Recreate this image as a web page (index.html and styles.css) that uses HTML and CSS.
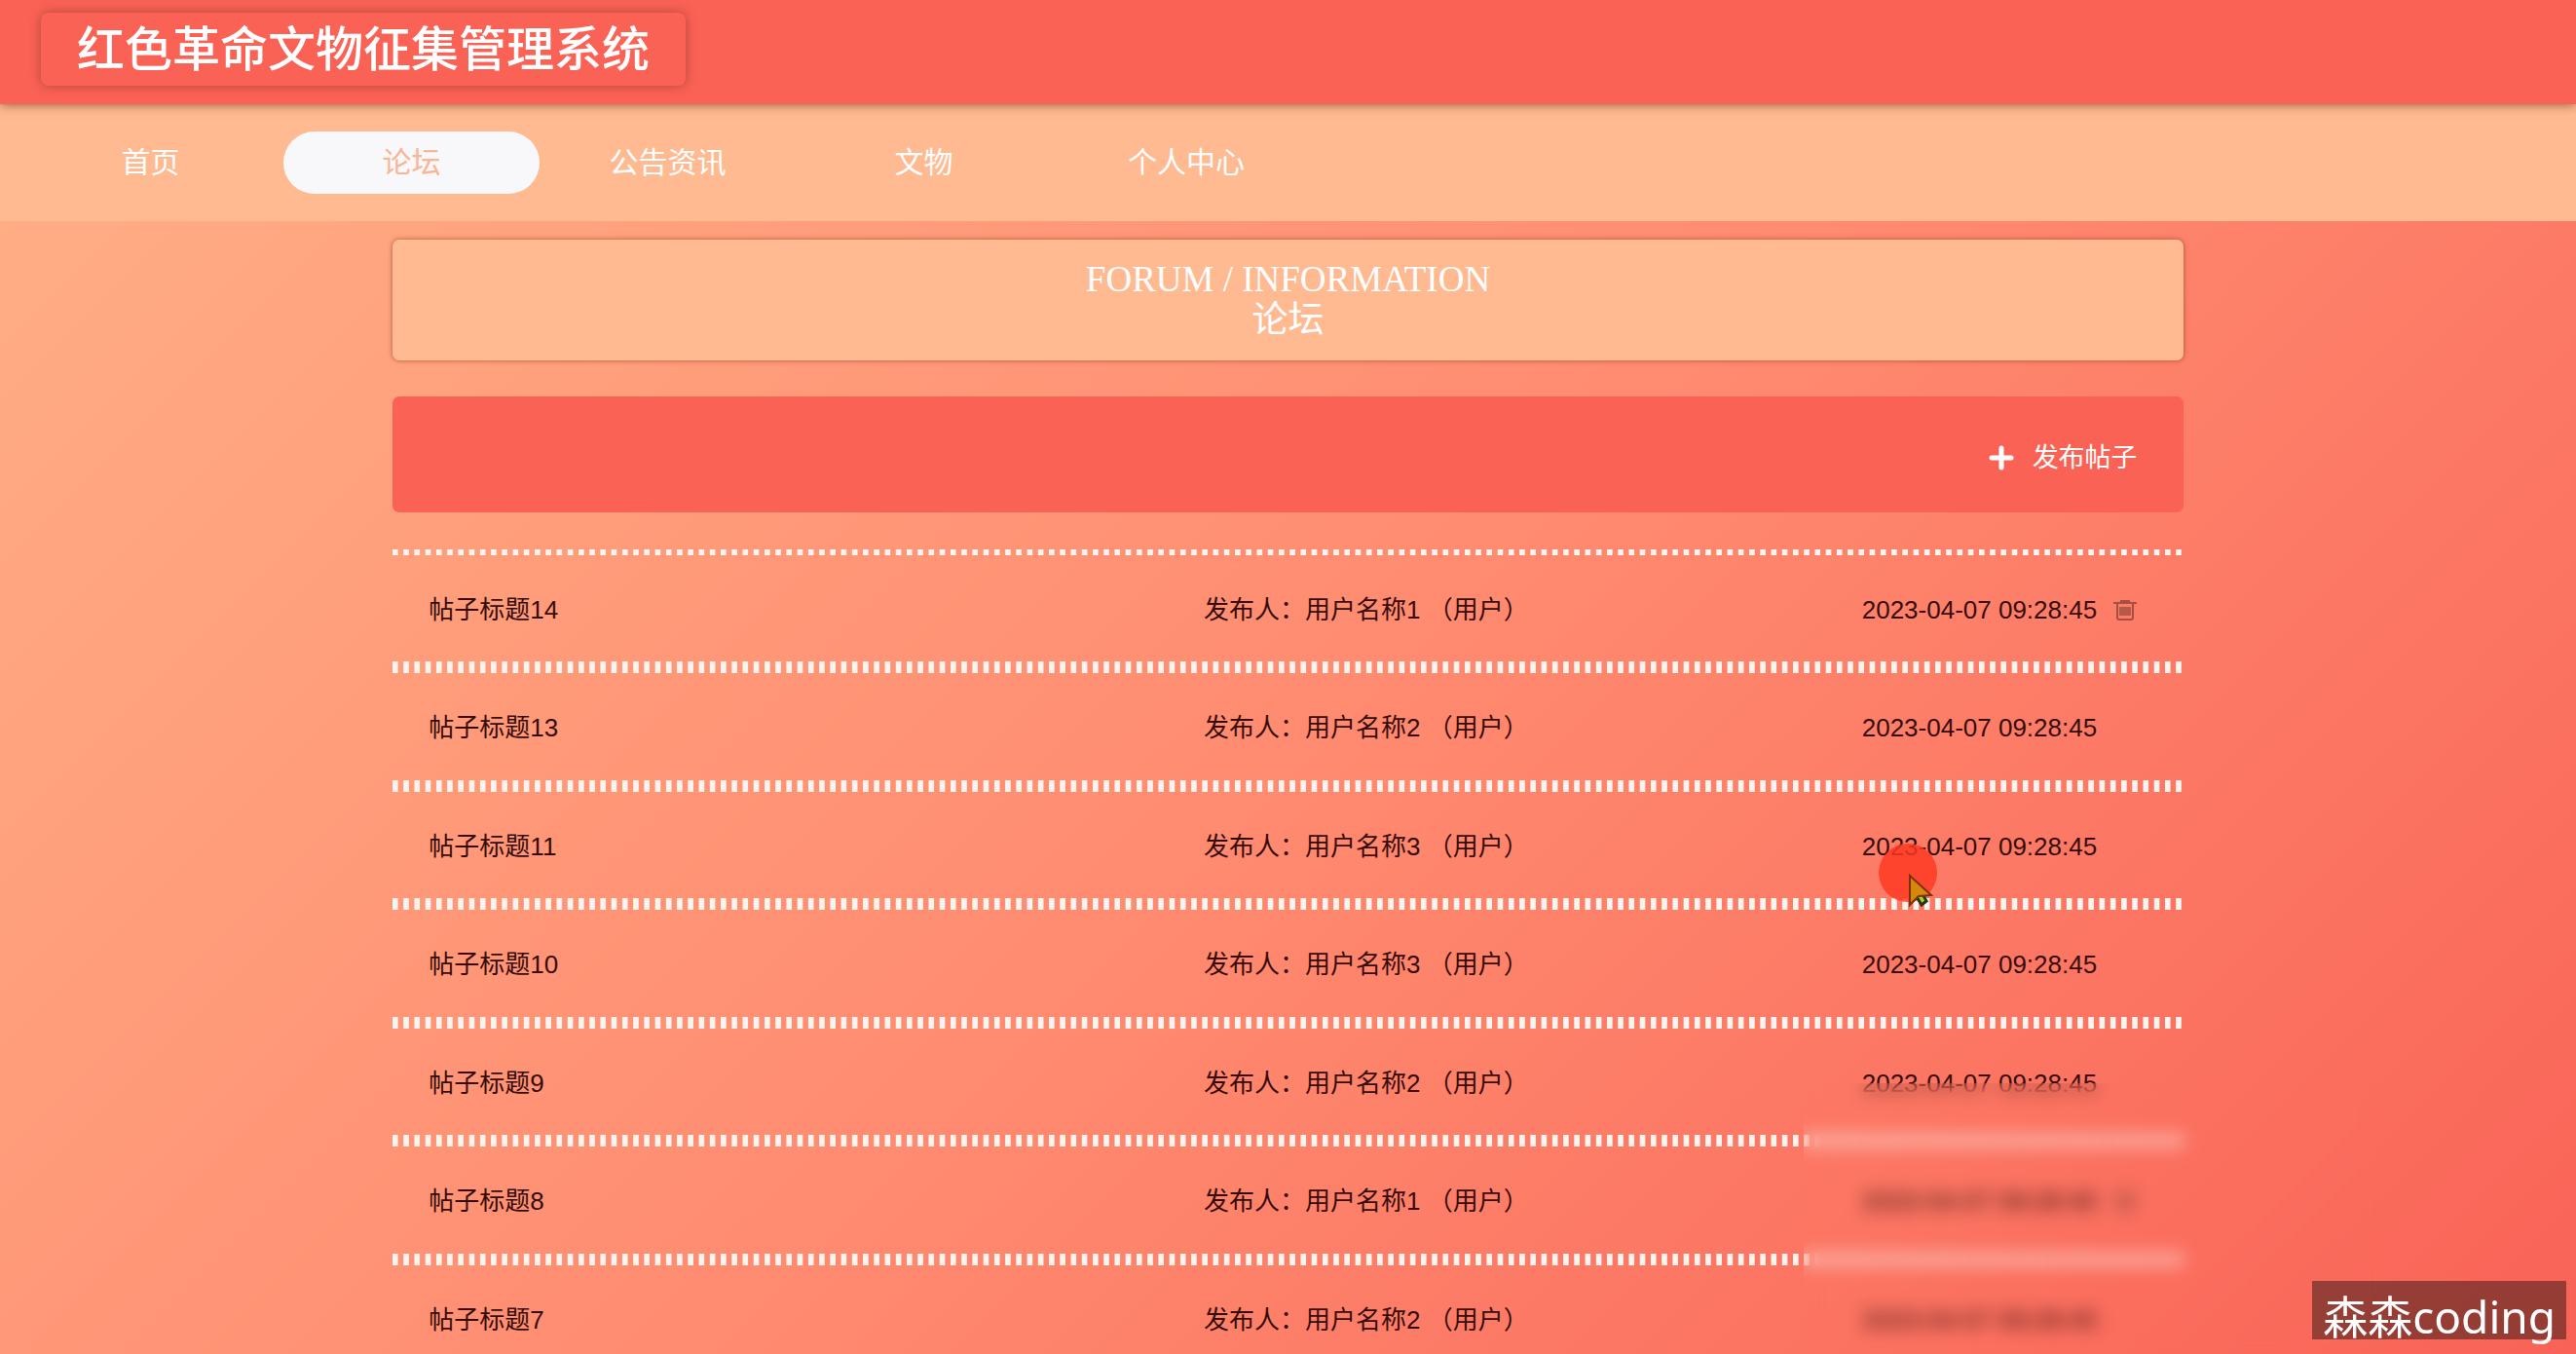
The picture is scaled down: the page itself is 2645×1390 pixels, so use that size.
FILE: index.html
```html
<!DOCTYPE html>
<html lang="zh-CN">
<head>
<meta charset="utf-8">
<meta name="viewport" content="width=device-width, initial-scale=1">
<title>红色革命文物征集管理系统</title>
<link rel="stylesheet" href="styles.css">
</head>
<body>
<svg class="sprite" aria-hidden="true">
  <symbol id="trash" viewBox="0 0 24 24">
    <path d="M0 5h24" fill="none" stroke="currentColor" stroke-width="2"/>
    <path d="M7 2h10v3H7z" fill="currentColor"/>
    <path d="M4 6v14q0 2 2 2h12q2 0 2-2V6" fill="none" stroke="currentColor" stroke-width="2"/>
    <path d="M6 9h12v9H6z" fill="currentColor" fill-opacity=".8"/>
  </symbol>
</svg>
<header class="header"><h1 class="brand">红色革命文物征集管理系统</h1></header>
<nav class="nav">
  <a class="nav-link" href="#">首页</a>
  <a class="nav-link active" href="#" aria-current="page">论坛</a>
  <a class="nav-link" href="#">公告资讯</a>
  <a class="nav-link" href="#">文物</a>
  <a class="nav-link" href="#">个人中心</a>
</nav>
<main class="content">
  <h2 class="banner"><span>FORUM / INFORMATION</span><span>论坛</span></h2>
  <div class="toolbar">
    <button class="publish" type="button">
      <svg class="plus" viewBox="0 0 26 26" aria-hidden="true"><path d="M13 3v20M3 13h20" stroke="currentColor" stroke-width="5" stroke-linecap="round"/></svg>
      <span>发布帖子</span>
    </button>
  </div>
  <ul class="posts">
    <li class="post"><a class="title" href="#">帖子标题14</a><span>发布人：用户名称1 （用户）</span><span class="meta"><time>2023-04-07 09:28:45</time><button class="remove" type="button" aria-label="删除"><svg class="bin"><use href="#trash"/></svg></button></span></li>
    <li class="post"><a class="title" href="#">帖子标题13</a><span>发布人：用户名称2 （用户）</span><span class="meta"><time>2023-04-07 09:28:45</time></span></li>
    <li class="post"><a class="title" href="#">帖子标题11</a><span>发布人：用户名称3 （用户）</span><span class="meta"><time>2023-04-07 09:28:45</time></span></li>
    <li class="post"><a class="title" href="#">帖子标题10</a><span>发布人：用户名称3 （用户）</span><span class="meta"><time>2023-04-07 09:28:45</time></span></li>
    <li class="post"><a class="title" href="#">帖子标题9</a><span>发布人：用户名称2 （用户）</span><span class="meta"><time>2023-04-07 09:28:45</time></span></li>
    <li class="post"><a class="title" href="#">帖子标题8</a><span>发布人：用户名称1 （用户）</span><span class="meta"><time>2023-04-07 09:28:45</time><button class="remove" type="button" aria-label="删除"><svg class="bin"><use href="#trash"/></svg></button></span></li>
    <li class="post"><a class="title" href="#">帖子标题7</a><span>发布人：用户名称2 （用户）</span><span class="meta"><time>2023-04-07 09:28:45</time></span></li>
  </ul>
</main>
<div class="frost"></div>
<svg class="pointer" viewBox="0 0 60 70" aria-hidden="true">
  <circle cx="30" cy="30" r="30" fill="#ff3822" fill-opacity=".82"/>
  <path d="M38 53l6-3 5 9-5 4z" fill="#a4d62a" stroke="#2c3510" stroke-width="3"/>
  <path d="M32 33v30l9-9 13-1z" fill="#d8860c" stroke="#7a3208" stroke-width="2"/>
</svg>
<div class="watermark">森森coding</div>
</body>
</html>
```

FILE: styles.css
```css
* { box-sizing: border-box; }

body {
  position: relative;
  height: 100vh;
  margin: 0;
  overflow: hidden;
  background: linear-gradient(135deg, #ffb187 0%, #ff8b70 52%, #f96357 100%);
  color: #360b09;
  font: 26px/36px "Liberation Sans", "Noto Sans CJK SC", sans-serif;
}

a { color: inherit; text-decoration: none; }
button { padding: 0; border: 0; background: none; color: inherit; font: inherit; }
.sprite { position: absolute; width: 0; height: 0; }

.header {
  position: relative;
  display: flex;
  padding: 13px 42px 19px;
  background: #fb6256;
  box-shadow: 0 1px 10px rgba(90, 40, 20, .6);
}

.brand {
  margin: 0;
  padding: 2px 37px 0;
  border-radius: 8px;
  box-shadow: 0 0 12px rgba(90, 40, 20, .45);
  color: #fff;
  font-size: 49px;
  font-weight: 500;
  line-height: 73px;
}

.nav {
  display: grid;
  grid-template-columns: 273px 263px 263px 263px 276px;
  padding: 28px 18px;
  background: #ffba92;
}

.nav-link {
  border-radius: 32px;
  color: #fff;
  font-size: 30px;
  line-height: 64px;
  text-align: center;
}

.nav-link.active { background: #f8f8fa; color: #f8b597; }

.content { width: 69.5%; margin: 0 auto; padding-top: 19px; }

.banner {
  display: flex;
  flex-direction: column;
  align-items: center;
  margin: 0 0 37px;
  padding: 20px;
  border-radius: 7px;
  background: #ffba92;
  box-shadow: 0 0 5px rgba(150, 60, 30, .75);
  color: #fff;
  font: 400 37px/42px "Liberation Serif", "Noto Sans CJK SC", serif;
}

.toolbar {
  display: flex;
  justify-content: flex-end;
  padding: 45px 47px 38px;
  border-radius: 7px;
  background: #fb6256;
}

.publish { display: flex; align-items: center; gap: 19px; color: #fff; font-size: 27px; }
.plus { width: 26px; height: 26px; }

.posts { margin: 38px 0 0; padding: 0; list-style: none; }

/* Square-dotted rules along the top and bottom edge of every row. */
.post {
  display: grid;
  grid-template-columns: 796fr 676fr 293fr;
  align-items: center;
  height: 121px;
  padding: 2px 37px 0;
  background-image: linear-gradient(90deg, #fbf3ee 6px, transparent 6px), linear-gradient(90deg, #fbf3ee 6px, transparent 6px);
  background-position: left top, left bottom;
  background-repeat: repeat-x;
  background-size: calc((100% - 6px) / 163) 6px;
}

.post:nth-child(even) { height: 122px; }

.meta { display: flex; align-items: center; gap: 17px; }
.remove { display: flex; color: #a54f42; }
.bin { width: 24px; height: 24px; }

.frost {
  position: absolute;
  top: 1112px;
  right: 200px;
  bottom: 0;
  left: 70%;
  backdrop-filter: blur(9px);
}

.pointer { position: absolute; top: 866px; left: 1929px; width: 60px; height: 70px; }

.watermark {
  position: absolute;
  right: 10px;
  bottom: 15px;
  height: 60px;
  padding: 0 11px;
  background: rgba(0, 0, 0, .4);
  color: #fff;
  font: 46px/72px "Noto Sans", "Noto Sans CJK SC", sans-serif;
}
```
